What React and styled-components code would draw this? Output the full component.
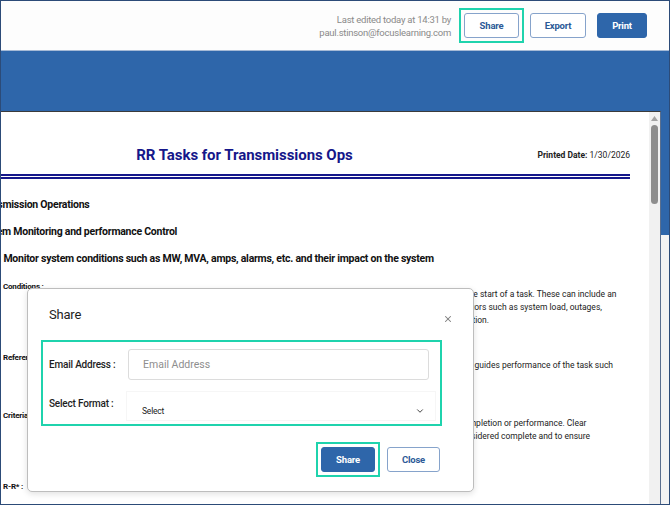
import React from "react";
import styled, { createGlobalStyle } from "styled-components";
import { X, ChevronDown } from "lucide-react";

const GlobalStyle = createGlobalStyle`
  html, body {
    margin: 0;
    padding: 0;
    background: #ffffff;
  }
  body {
    font-family: Roboto, "Liberation Sans", Arial, sans-serif;
  }
  * {
    box-sizing: border-box;
  }
`;

const BLUE = "#2e66aa";
const TEAL = "#1fd3ad";
const NAVY = "#15178a";

const Frame = styled.div`
  width: 670px;
  height: 505px;
  border: 1px solid #2c4b78;
  display: flex;
  flex-direction: column;
  overflow: hidden;
`;

const TopBar = styled.header`
  height: 50px;
  flex: none;
  display: flex;
  align-items: center;
  justify-content: flex-end;
  gap: 11px;
  padding-right: 22px;
  background: #fdfdfd;
  border-bottom: 1px solid #a6bad6;
`;

const Edited = styled.div`
  margin-right: 2px;
  text-align: right;
  font-size: 9.5px;
  line-height: 13px;
  letter-spacing: -0.25px;
  color: #8a8a8a;
`;

// $marked draws the square teal focus frame seen around a button
const Button = styled.button`
  position: relative;
  height: 25px;
  min-width: ${(p) => p.$w || 54}px;
  padding: 0 10px;
  border-radius: 3px;
  font-family: inherit;
  font-size: 9.5px;
  font-weight: 700;
  letter-spacing: -0.2px;
  cursor: pointer;
  border: 1px solid ${(p) => (p.$primary ? BLUE : "#86a3cb")};
  background: ${(p) => (p.$primary ? BLUE : "#ffffff")};
  color: ${(p) => (p.$primary ? "#ffffff" : "#2c5a97")};

  &::after {
    content: "";
    display: ${(p) => (p.$marked ? "block" : "none")};
    position: absolute;
    inset: -6px;
    border: 2px solid ${TEAL};
  }
`;

const Band = styled.main`
  flex: 1;
  display: flex;
  min-height: 0;
  padding: 60px 8px 0 0;
  background: linear-gradient(${BLUE} 0 184px, #f3f3f3 184px);
`;

const Panel = styled.section`
  position: relative;
  flex: 1;
  display: flex;
  min-width: 0;
  background: #ffffff;
  border-top: 1px solid #3b3b3b;
  border-right: 1px solid #5a6f8e;
`;

const Sheet = styled.div`
  flex: 1;
  min-width: 0;
  overflow: hidden;
  padding-right: 19px;
`;

const TitleRow = styled.div`
  display: flex;
  align-items: center;
  height: 67px;
  padding-top: 24px;
  border-bottom: 5px double ${NAVY};
`;

const Title = styled.h1`
  flex: 1;
  margin: 0;
  text-align: center;
  font-size: 15px;
  font-weight: 700;
  letter-spacing: -0.05px;
  color: ${NAVY};
`;

const Printed = styled.div`
  width: 142px;
  text-align: right;
  font-size: 8.5px;
  color: #222;

  b {
    font-weight: 700;
  }
`;

const Headings = styled.div`
  padding-top: 12px;
  margin-left: -24px;
`;

const Heading = styled.div`
  height: 27px;
  line-height: 27px;
  white-space: nowrap;
  font-size: 10.5px;
  font-weight: 700;
  letter-spacing: -0.25px;
  color: #111;
`;

const Fields = styled.div`
  display: flex;
  flex-direction: column;
  gap: 24px;
  padding-top: 8px;
`;

const Field = styled.div`
  display: grid;
  grid-template-columns: 75px 1fr;
  padding-left: 2px;
`;

const Label = styled.div`
  height: 13px;
  line-height: 13px;
  white-space: nowrap;
  font-size: 8px;
  font-weight: 700;
  letter-spacing: -0.2px;
  color: #111;
`;

const Value = styled.div`
  padding-top: 8px;
  min-width: 0;
`;

const Line = styled.div`
  height: 13px;
  line-height: 13px;
  white-space: nowrap;
  font-size: 8.5px;
  color: #222;
`;

const Scrollbar = styled.div`
  width: 11px;
  flex: none;
  display: flex;
  flex-direction: column;
  align-items: center;
  padding-top: 4px;
  gap: 4px;
  background: #f1f1f1;
`;

const Thumb = styled.div`
  width: 7px;
  height: 79px;
  border-radius: 4px;
  background: #8d8d8d;
`;

const Modal = styled.div`
  position: absolute;
  left: 26px;
  top: 176px;
  width: 447px;
  height: 204px;
  padding: 16px 33px 0 21px;
  background: #ffffff;
  border: 1px solid #bdbdbd;
  border-radius: 5px;
  box-shadow: 0 2px 6px rgba(0, 0, 0, 0.12);
  display: flex;
  flex-direction: column;
`;

const ModalHead = styled.div`
  display: flex;
  align-items: center;
  justify-content: space-between;
  height: 18px;
  margin-right: -13px;
`;

const ModalTitle = styled.h2`
  margin: 0;
  font-size: 13px;
  font-weight: 400;
  letter-spacing: -0.2px;
  color: #1e1e1e;
`;

const CloseX = styled.span`
  display: flex;
  margin-top: 10px;
  color: #7d7d7d;
`;

const FormBox = styled.div`
  margin: 17px -2px 0 -8px;
  border: 2px solid ${TEAL};
  padding: 7px 7px 3px 6px;
  display: grid;
  grid-template-columns: 79px 1fr;
  row-gap: 11px;
  align-items: center;
`;

const FormLabel = styled.label`
  font-size: 10px;
  font-weight: 500;
  letter-spacing: -0.2px;
  color: #1e1e1e;
  align-self: ${(p) => (p.$top ? "start" : "center")};
  padding-top: ${(p) => (p.$top ? "7px" : "0")};
`;

const Input = styled.input`
  height: 31px;
  width: 301px;
  padding: 0 14px;
  border: 1px solid #dcdcdc;
  border-radius: 3px;
  font-family: inherit;
  font-size: 10.5px;
  color: #333;

  &::placeholder {
    color: #8e8e8e;
  }
`;

const SelectBox = styled.div`
  height: 30px;
  margin-left: -2px;
  margin-right: -3px;
  display: flex;
  align-items: center;
  justify-content: space-between;
  padding: 9px 10px 0 15px;
  border: 1px solid #f6f6f6;
  font-size: 8.5px;
  letter-spacing: -0.2px;
  color: #222;
`;

const Footer = styled.div`
  display: flex;
  justify-content: flex-end;
  gap: 12px;
  margin-top: 21px;
`;

const UpArrow = () => (
  <svg width="7" height="5" viewBox="0 0 7 5">
    <path d="M3.5 0 L7 5 L0 5 Z" fill="#a3a3a3" />
  </svg>
);

export default function App() {
  return (
    <>
      <GlobalStyle />
      <Frame>
        <TopBar>
          <Edited>
            Last edited today at 14:31 by
            <br />
            paul.stinson@focuslearning.com
          </Edited>
          <Button $w={55} $marked>Share</Button>
          <Button $w={56}>Export</Button>
          <Button $w={50} $primary>Print</Button>
        </TopBar>

        <Band>
          <Panel>
            <Sheet>
              <TitleRow>
                <Title>RR Tasks for Transmissions Ops</Title>
                <Printed>
                  <b>Printed Date:</b> 1/30/2026
                </Printed>
              </TitleRow>

              <Headings>
                <Heading>Transmission Operations</Heading>
                <Heading>System Monitoring and performance Control</Heading>
                <Heading>Task: Monitor system conditions such as MW, MVA, amps, alarms, etc. and their impact on the system</Heading>
              </Headings>

              <Fields>
                <Field>
                  <Label>Conditions :</Label>
                  <Value>
                    <Line>Conditions are the circumstances, environment, and system status that exist or must be established at the start of a task. These can include an</Line>
                    <Line>initiating events, operating states, weather, equipment availability, line and switching status and other factors such as system load, outages,</Line>
                    <Line>or any abnormal conditions that may affect the task or place the system into an emergency or alert condition.</Line>
                  </Value>
                </Field>
                <Field>
                  <Label>References :</Label>
                  <Value>
                    <Line>Referenced material such as procedures, operating guides, manuals, or other documentation that directly guides performance of the task such</Line>
                    <Line>as operating instructions and checklists.</Line>
                  </Value>
                </Field>
                <Field>
                  <Label>Criteria :</Label>
                  <Value>
                    <Line>Criteria are the measurable standards used to evaluate the task, and to then determine its successful completion or performance. Clear</Line>
                    <Line>standards and performance criteria are used to clearly define the point at which the task can then be considered complete and to ensure</Line>
                    <Line>consistent performance.</Line>
                  </Value>
                </Field>
                <Field>
                  <Label>R-R* :</Label>
                </Field>
              </Fields>
            </Sheet>

            <Scrollbar>
              <UpArrow />
              <Thumb />
            </Scrollbar>

            <Modal>
              <ModalHead>
                <ModalTitle>Share</ModalTitle>
                <CloseX>
                  <X size={10} strokeWidth={2.5} />
                </CloseX>
              </ModalHead>

              <FormBox>
                <FormLabel>Email Address :</FormLabel>
                <Input placeholder="Email Address" />
                <FormLabel $top>Select Format :</FormLabel>
                <SelectBox>
                  Select
                  <ChevronDown size={10} strokeWidth={2} />
                </SelectBox>
              </FormBox>

              <Footer>
                <Button $w={54} $primary $marked>Share</Button>
                <Button $w={53}>Close</Button>
              </Footer>
            </Modal>
          </Panel>
        </Band>
      </Frame>
    </>
  );
}
